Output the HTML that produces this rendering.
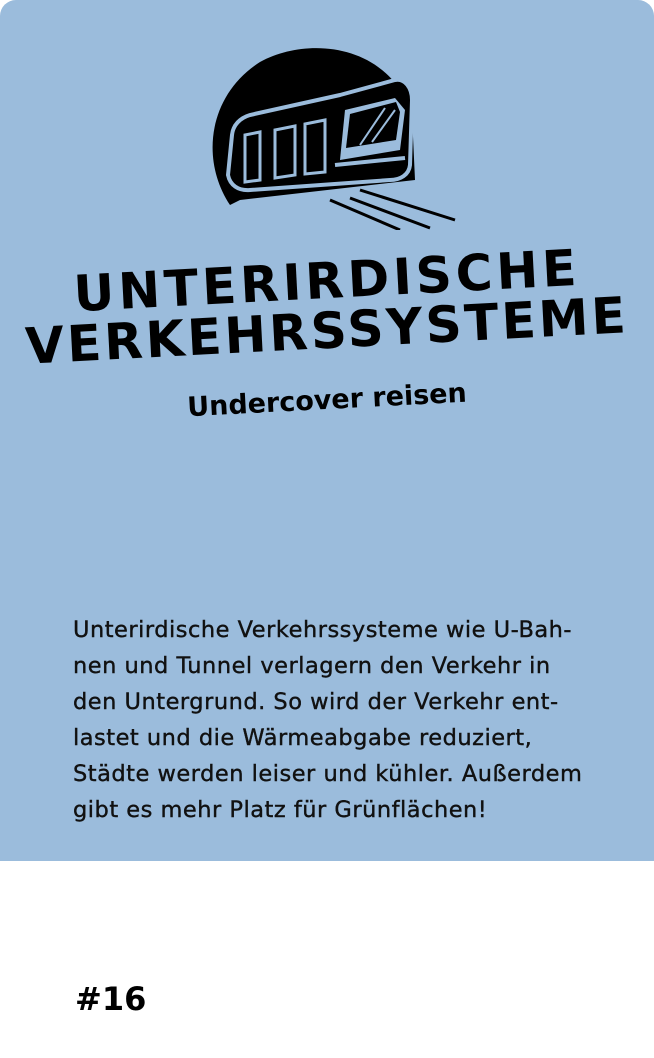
<!DOCTYPE html>
<html><head><meta charset="utf-8"><style>
body{margin:0;width:654px;height:1058px;background:#fff;position:relative;overflow:hidden;font-family:"DejaVu Sans","Liberation Sans",sans-serif}
.card{position:absolute;left:0;top:0;width:654px;height:861px;background:#9bbcdc;border-radius:16px 16px 0 0}
.t{position:absolute;left:0;width:654px;text-align:center;font-weight:bold;color:#000;transform:rotate(-3deg);white-space:nowrap}
.p{position:absolute;left:73px;top:612px;width:580px;font-size:22.5px;letter-spacing:0.5px;line-height:36px;color:#111;white-space:nowrap;-webkit-text-stroke:0.4px #111}
.n{position:absolute;left:75px;top:980px;font-size:32px;font-weight:bold}
</style></head><body>
<div class="card"></div>
<svg style="position:absolute;left:200px;top:40px" width="260" height="190" viewBox="0 0 260 190">
<path d="M30 165 C0 120 8 55 60 22 C110 -5 190 5 212 75 L215 140 L40 160 Z" fill="#000"/>
<path d="M140 55 L195 40 C205 38 212 48 212 60 L210 125 C209 135 200 140 190 140 L50 150 C38 151 30 145 28 135 L32 95 C33 85 40 78 50 75 Z" fill="#000" stroke="#9bbcdc" stroke-width="4"/>
<path d="M145 70 L195 58 L205 70 L200 110 L140 120 Z" fill="#9bbcdc"/>
<path d="M150 74 L196 62 L200 72 L196 100 L146 108 Z" fill="#000"/>
<path d="M160 105 L185 68 M172 102 L195 70" stroke="#9bbcdc" stroke-width="2"/>
<path d="M45 95 L60 92 L60 140 L45 142 Z M75 90 L95 86 L95 135 L75 138 Z M105 84 L125 80 L125 132 L105 134 Z" fill="none" stroke="#9bbcdc" stroke-width="3"/>
<path d="M135 125 L205 118" stroke="#9bbcdc" stroke-width="4"/>
<path d="M160 150 L255 180 M150 158 L230 188 M130 160 L200 190" stroke="#000" stroke-width="3"/>
</svg>
<div class="t" style="top:252px;font-size:50px;letter-spacing:4px">UNTERIRDISCHE</div>
<div class="t" style="top:302px;font-size:50px;letter-spacing:3px">VERKEHRSSYSTEME</div>
<div class="t" style="top:385px;font-size:27px">Undercover reisen</div>
<div class="p">Unterirdische Verkehrssysteme wie U-Bah-<br>nen und Tunnel verlagern den Verkehr in<br>den Untergrund. So wird der Verkehr ent-<br>lastet und die Wärmeabgabe reduziert,<br>Städte werden leiser und kühler. Außerdem<br>gibt es mehr Platz für Grünflächen!</div>
<div class="n">#16</div>
</body></html>
